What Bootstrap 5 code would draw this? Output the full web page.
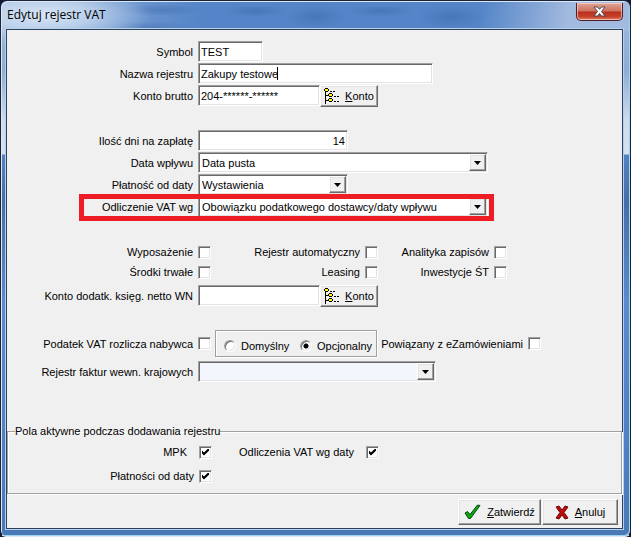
<!DOCTYPE html>
<html lang="pl">
<head>
<meta charset="utf-8">
<meta name="viewport" content="width=device-width, initial-scale=1">
<title>Edytuj rejestr VAT</title>
<link href="https://cdn.jsdelivr.net/npm/bootstrap@5.3.0/dist/css/bootstrap.min.css" rel="stylesheet">
<style>
body { font: 11px/14px "Liberation Sans", Arial, sans-serif; color: #000; background: #101a33; }
.win-frame {
  min-height: 100vh; padding: 3px 7px 7px 5px;
  border: 1px solid #1a2338; border-bottom-color: #dfe8f2; border-radius: 7px 7px 6px 6px;
  background:
    radial-gradient(ellipse 105px 30px at 45px 14px, rgba(225,236,249,.9), rgba(215,229,246,.65) 45%, rgba(215,229,246,0)),
    radial-gradient(ellipse 40px 6px at 160px 9px, rgba(40,80,150,.3), rgba(40,80,150,0)),
    radial-gradient(ellipse 40px 6px at 150px 26px, rgba(40,80,150,.25), rgba(40,80,150,0)),
    radial-gradient(ellipse 32px 6px at 255px 10px, rgba(40,80,150,.3), rgba(40,80,150,0)),
    radial-gradient(ellipse 30px 12px at 315px 16px, rgba(40,80,150,.3), rgba(40,80,150,0)),
    radial-gradient(ellipse 34px 6px at 380px 10px, rgba(40,80,150,.3), rgba(40,80,150,0)),
    radial-gradient(ellipse 34px 12px at 450px 16px, rgba(40,80,150,.3), rgba(40,80,150,0)),
    linear-gradient(100deg, rgba(160,187,222,.9) 0, rgba(110,150,205,0) 32%, rgba(110,150,205,0) 76%, rgba(170,192,225,.9) 90%) 0 0/100% 30px no-repeat,
    linear-gradient(#5585c8, #5585c8) 0 0/100% 30px no-repeat,
    linear-gradient(#9fb9dc 0, #8eadd6 70px, #cfdcec 120px, #d6e1ef 153px, #5382c3 154px, #466fa9 200px, #5b8bcc 300px, #4a79b8 100%);
  box-shadow: inset 1px 1px #dce8f6, inset -1px -1px #9fd4ef;
}
.win-title { height: 25px; padding-left: 1px; }
.win-title h1 { font: 12px/22px "Open Sans", sans-serif; margin: 0; }
.win-close {
  width: 47px; height: 18px; margin-top: -1px; padding: 0; border: 1px solid #501c28; border-top: 0; border-radius: 0 0 5px 5px;
  background: linear-gradient(#e0a596 0, #cf7261 8px, #b8301c 9px, #c8432b 14px, #dd8a70 100%);
  box-shadow: inset 0 0 0 1px rgba(255,225,215,.6);
}
.win-body { background: #f0f0f0; border: 1px solid #2c4360; box-shadow: 0 0 0 1px #b9d0ea; }
.form-area { padding: 11px 0 0; }
.line { gap: 4px; }
.line > .cap { width: 187px; text-align: right; padding-right: 1px; }
.stack { display: grid; gap: 1px; }
.sunk, .tick {
  border: 1px solid; border-color: #a0a0a0 #fff #fff #a0a0a0; border-radius: 0; outline-offset: -2px;
  background: #fff; box-shadow: inset 1px 1px #696969, inset -1px -1px #e3e3e3; color: #000;
}
.sunk { height: 21px; padding: 0 2px; font: inherit; appearance: none; width: 100%; }
select.sunk { padding: 0 3px; }
.w-xs { width: 65px; } .w-sm { width: 122px; } .w-md { width: 150px; } .w-lg { width: 235px; }
.w-cb { width: 238px; } .w-xl { width: 290px; }
.pale { background: #f3f7fd; }
.raised {
  border: 1px solid; border-color: #fff #696969 #696969 #fff; border-radius: 0; background: #f0f0f0;
  box-shadow: inset -1px -1px #a0a0a0, inset 1px 1px #e3e3e3; color: #000; font: inherit; padding: 0;
}
.drop { position: absolute; right: 2px; top: 2px; width: 17px; height: 17px; pointer-events: none; }
.text-caret { position: absolute; left: 79px; top: 4px; width: 1px; height: 13px; background: #000; }
.btn-konto { width: 58px; height: 22px; margin-left: -4px; margin-bottom: -1px; gap: 5px; }
.marked::after { content: ""; position: absolute; left: 72px; top: -2px; width: 415px; height: 27px; border: 5px solid #ee1c25; pointer-events: none; }
.ticks { display: grid; grid-template-columns: 187px 13px 146px 13px 108px 13px; gap: 6px 4px; align-items: center; padding-bottom: 2px; }
.ticks label { text-align: right; padding-right: 1px; }
.tick { appearance: none; width: 13px; height: 13px; margin: 0; position: relative; display: block; flex: none; }
.tick:checked::before {
  content: ""; position: absolute; left: 2px; top: 2px; width: 7px; height: 7px; background: #000;
  clip-path: polygon(0 28%, 28% 57%, 100% -10%, 100% 33%, 28% 100%, 0 72%);
}
.dot { appearance: none; width: 12px; height: 12px; margin: 0 5px 0 0; border-radius: 50%; border: 1px solid; border-color: #a0a0a0 #fff #fff #a0a0a0; background: #fff; box-shadow: inset 1px 1px #696969, inset -1px -1px #e3e3e3; flex: none; }
.dot:checked { background: radial-gradient(circle at 5px 5px, #000 2px, #fff 3px); }
.etched { border: 1px solid #a0a0a0; box-shadow: 1px 1px #fff, inset 1px 1px #fff; }
.opts { width: 162px; height: 27px; padding: 4px 0 0 8px; }
.opts label { width: 59px; white-space: nowrap; }
.ezam { width: 143px; text-align: right; white-space: nowrap; padding-right: 1px; }
.active-set { margin-top: 42px; height: 70px; }
.active-set fieldset { height: 70px; }
.active-set legend { float: none; width: auto; margin: 0 0 0 7px; padding: 0; font: inherit; line-height: 15px; }
.active-set .ticks { padding-top: 6px; row-gap: 10px; }
.footer-bar { padding: 1px 4px 3px; gap: 1px; }
.footer-bar .raised { height: 26px; }
.ok-btn { width: 83px; gap: 6px; } .no-btn { width: 76px; gap: 6px; }
</style>
</head>
<body>
<main class="win-frame d-flex flex-column">
  <header class="win-title d-flex justify-content-between align-items-start">
    <h1>Edytuj rejestr VAT</h1>
    <button type="button" class="win-close d-flex align-items-center justify-content-center" aria-label="Zamknij">
      <svg width="13" height="11" viewBox="0 0 13 11"><path d="M1 1h3.500l2 2.300L8.500 1H12L8.500 5.500 12 10H8.500l-2-2.500-2 2.500H1l3.500-4.500z" fill="#fff" stroke="#4b4b5c"/></svg>
    </button>
  </header>
  <form class="win-body flex-grow-1 d-flex flex-column">
    <div class="form-area">
      <div class="stack">
        <div class="line d-flex align-items-center"><label class="cap" for="symbol">Symbol</label><div class="w-xs"><input class="sunk" id="symbol" value="TEST"></div></div>
        <div class="line d-flex align-items-center"><label class="cap" for="nazwa">Nazwa rejestru</label><div class="w-lg position-relative"><input class="sunk" id="nazwa" value="Zakupy testowe"><span class="text-caret"></span></div></div>
        <div class="line d-flex align-items-center"><label class="cap" for="brutto">Konto brutto</label><div class="w-sm"><input class="sunk" id="brutto" value="204-******-******"></div>
          <button type="button" class="raised btn-konto d-flex align-items-center justify-content-center">
            <svg width="16" height="16" viewBox="0 0 16 16" shape-rendering="crispEdges"><path d="M1 0h3v1h1v2H4v1H1V3H0V1h1zM5 5h3v1h1v2H8v1H5V8H4V6h1zM5 10h3v1h1v2H8v1H5v-1H4v-2h1zM1 4h1v12H1zM2 7h2v1H2zM2 12h2v1H2zM6 3h2v1H6zM9 3h2v1H9zM10 8h2v1h-2zM13 8h2v1h-2zM10 13h2v1h-2zM13 13h2v1h-2z"/><path d="M1 1h3v2H1zM5 6h3v2H5zM5 11h3v2H5z" fill="#ff0"/></svg>
            <span><u>K</u>onto</span></button></div>
      </div>
      <div class="stack mt-4">
        <div class="line d-flex align-items-center"><label class="cap" for="dni">Ilość dni na zapłatę</label><div class="w-md"><input class="sunk text-end" id="dni" value="14"></div></div>
        <div class="line d-flex align-items-center"><label class="cap" for="wplyw">Data wpływu</label><div class="w-xl position-relative"><select class="sunk" id="wplyw"><option>Data pusta</option></select><svg class="drop raised" viewBox="0 0 15 15"><path d="M4 6h7l-3.500 4z"/></svg></div></div>
        <div class="line d-flex align-items-center"><label class="cap" for="platnosc">Płatność od daty</label><div class="w-md position-relative"><select class="sunk" id="platnosc"><option>Wystawienia</option></select><svg class="drop raised" viewBox="0 0 15 15"><path d="M4 6h7l-3.500 4z"/></svg></div></div>
        <div class="line marked position-relative d-flex align-items-center"><label class="cap" for="odliczenie">Odliczenie VAT wg</label><div class="w-xl position-relative"><select class="sunk" id="odliczenie"><option>Obowiązku podatkowego dostawcy/daty wpływu</option></select><svg class="drop raised" viewBox="0 0 15 15"><path d="M4 6h7l-3.500 4z"/></svg></div></div>
      </div>
      <div class="ticks mt-4 pt-1">
        <label for="c1">Wyposażenie</label><input type="checkbox" class="tick" id="c1">
        <label for="c2">Rejestr automatyczny</label><input type="checkbox" class="tick" id="c2">
        <label for="c3">Analityka zapisów</label><input type="checkbox" class="tick" id="c3">
        <label for="c4">Środki trwałe</label><input type="checkbox" class="tick" id="c4">
        <label for="c5">Leasing</label><input type="checkbox" class="tick" id="c5">
        <label for="c6">Inwestycje ŚT</label><input type="checkbox" class="tick" id="c6">
      </div>
      <div class="line d-flex align-items-center mt-1"><label class="cap" for="netto">Konto dodatk. księg. netto WN</label><div class="w-sm"><input class="sunk" id="netto"></div>
        <button type="button" class="raised btn-konto d-flex align-items-center justify-content-center">
          <svg width="16" height="16" viewBox="0 0 16 16" shape-rendering="crispEdges"><path d="M1 0h3v1h1v2H4v1H1V3H0V1h1zM5 5h3v1h1v2H8v1H5V8H4V6h1zM5 10h3v1h1v2H8v1H5v-1H4v-2h1zM1 4h1v12H1zM2 7h2v1H2zM2 12h2v1H2zM6 3h2v1H6zM9 3h2v1H9zM10 8h2v1h-2zM13 8h2v1h-2zM10 13h2v1h-2zM13 13h2v1h-2z"/><path d="M1 1h3v2H1zM5 6h3v2H5zM5 11h3v2H5z" fill="#ff0"/></svg>
          <span><u>K</u>onto</span></button></div>
      <div class="line d-flex align-items-center mt-4"><label class="cap" for="nab">Podatek VAT rozlicza nabywca</label><input type="checkbox" class="tick" id="nab">
        <div class="opts etched d-flex align-items-center" role="radiogroup" aria-label="Tryb rozliczenia">
          <input type="radio" class="dot" name="tryb" id="r1"><label for="r1">Domyślny</label>
          <input type="radio" class="dot" name="tryb" id="r2" checked><label for="r2">Opcjonalny</label>
        </div>
        <label class="ezam" for="ezam">Powiązany z eZamówieniami</label><input type="checkbox" class="tick" id="ezam"></div>
      <div class="line d-flex align-items-center mt-1"><label class="cap" for="rej">Rejestr faktur wewn. krajowych</label><div class="w-cb position-relative"><select class="sunk pale" id="rej"><option></option></select><svg class="drop raised" viewBox="0 0 15 15"><path d="M4 6h7l-3.500 4z"/></svg></div></div>
    </div>
    <div class="active-set">
      <fieldset class="etched">
        <legend>Pola aktywne podczas dodawania rejestru</legend>
        <div class="ticks">
          <label class="pe-2" for="d1">MPK</label><input type="checkbox" class="tick" id="d1" checked>
          <label class="pe-2" for="d2">Odliczenia VAT wg daty</label><input type="checkbox" class="tick" id="d2" checked><span></span><span></span>
          <label for="d3">Płatności od daty</label><input type="checkbox" class="tick" id="d3" checked>
        </div>
      </fieldset>
    </div>
    <div class="footer-bar mt-auto d-flex justify-content-end">
      <button type="submit" class="raised ok-btn d-flex align-items-center justify-content-center"><svg width="17" height="16" viewBox="0 0 17 16"><path d="M1 9l2.500-1.500L6 10.500 13.500 1l2.500.5L6.500 14.500H4.500z" fill="#0aa80a" stroke="#064a12"/></svg><span><u>Z</u>atwierdź</span></button>
      <button type="button" class="raised no-btn d-flex align-items-center justify-content-center"><svg width="14" height="15" viewBox="0 0 14 15"><path d="M1 2l3-1 3 4 3-4 3 1-4 5.500L13 13l-3 1-3-4-3 4-3-1 4-5.500z" fill="#c00a0a" stroke="#6d0808"/></svg><span><u>A</u>nuluj</span></button>
    </div>
  </form>
</main>
<script src="https://cdn.jsdelivr.net/npm/bootstrap@5.3.0/dist/js/bootstrap.bundle.min.js"></script>
</body>
</html>
